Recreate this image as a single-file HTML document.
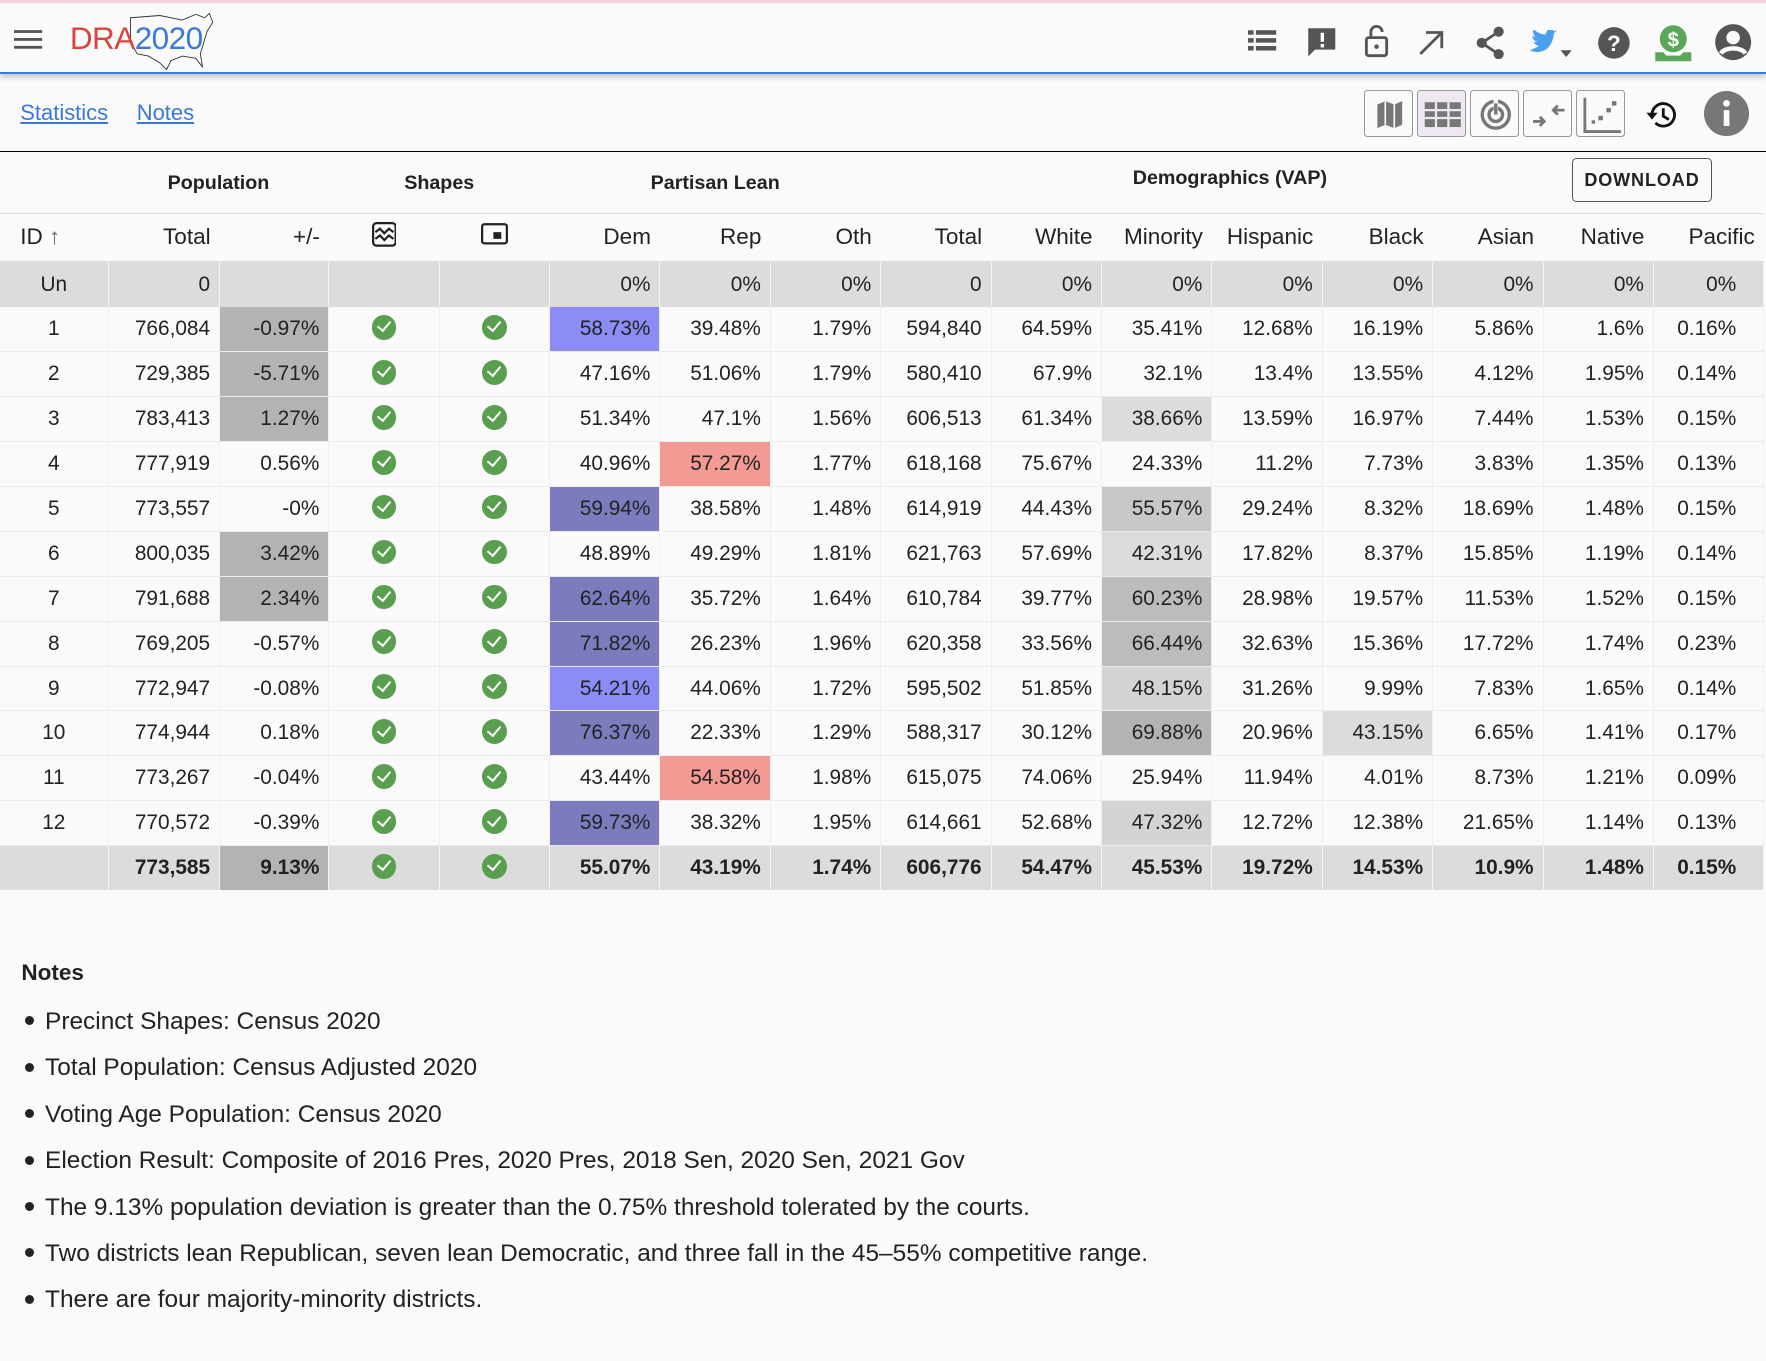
<!DOCTYPE html>
<html><head><meta charset="utf-8"><style>
html,body{margin:0;padding:0;background:#fafafa;}
body{width:1766px;height:1360px;overflow:hidden;}
#w{zoom:1.12628;width:1568px;height:1208px;position:relative;font-family:"Liberation Sans",Arial,sans-serif;color:#222;}
.top{position:absolute;left:0;top:0;width:1568px;height:66px;background:#fafafa;border-top:3px solid #f2d3da;box-sizing:border-box;border-bottom:2px solid #3b78d8;box-shadow:0 3px 5px rgba(0,0,0,.2);}
.ic{position:absolute;top:18px;}
.links{position:absolute;top:89px;left:18px;font-size:19.5px;}
.links a{color:#3b78d8;text-decoration:underline;margin-right:20px;}
.hl{position:absolute;top:134px;left:0;width:1568px;border-top:1.5px solid #000;}
.tb{position:absolute;left:1211px;top:80px;}
.tb div{position:absolute;top:0;width:44px;height:42px;border:1px solid #999;border-radius:3px;box-sizing:border-box;background:#fafafa;}
table{position:absolute;left:0;top:136px;border-collapse:collapse;table-layout:fixed;width:1566px;font-size:18.5px;}
td,th{padding:0 8px;text-align:right;white-space:nowrap;overflow:hidden;}
tr.g th{height:45px;padding:0;font-weight:bold;font-size:17.5px;text-align:center;border-bottom:1px solid #ddd;}
tr.h td{height:42px;padding-top:0;padding-bottom:0;font-size:20px;border-bottom:1px solid #ddd;}
tr.d td{height:39px;border-bottom:1px solid #ebebeb;border-right:1px solid #f0f0f0;}
tr.u td,tr.t td{background:#dcdcdc;height:40px;border-right:1px solid #f4f4f4;}
tr.t td{font-weight:bold;height:39px;}
td:last-child{padding-right:24px;}
td.c{text-align:center;}
.k1{border-left:1.3px solid #000 !important;}
.b1{background:#8b8cf6}.b2{background:#7b7bbe}.r{background:#f39a94}
.g1{background:#b3b3b3 !important}.g2{background:#bcbcbc}.g3{background:#c8c8c8}.g4{background:#d4d4d4}.g5{background:#dcdcdc}
.ck{display:inline-block;width:22px;height:22px;border-radius:50%;background:#5a9e50;position:relative;vertical-align:middle;margin-top:-4px;}
.ck:after{content:"";position:absolute;left:7px;top:3px;width:5px;height:10px;border:solid #fff;border-width:0 2.5px 2.5px 0;transform:rotate(40deg);}
.notes{position:absolute;left:19px;top:852px;font-size:21.7px;}
.notes b{display:block;font-size:20px;margin-bottom:20px;}
.notes div{height:41.2px;}
.notes div:before{content:"";display:inline-block;width:8px;height:8px;border-radius:50%;background:#222;margin:0 10px 3px 3px;vertical-align:middle;}
.dl{position:absolute;left:1396px;top:140px;width:122px;height:38px;border:1px solid #555;border-radius:4px;font-size:16px;font-weight:bold;letter-spacing:.8px;text-align:center;line-height:38px;}
</style></head><body><div id="w">
<div class="top">
<svg class="ic" style="left:12px;top:23px" width="26" height="20"><rect y="1" width="25" height="2.5" fill="#555"/><rect y="8" width="25" height="2.5" fill="#555"/><rect y="15" width="25" height="2.5" fill="#555"/></svg>
<svg style="position:absolute;left:112px;top:7px" width="80" height="56"><path d="M4 6 L30 4 L50 8 L62 3 L70 6 L74 2 L77 10 L72 18 L69 28 L66 38 L68 50 L62 42 L50 40 L40 44 L36 52 L30 46 L20 40 L10 38 L4 28 Z" fill="none" stroke="#333" stroke-width=".8"/></svg>
<div style="position:absolute;left:62px;top:15px;font-size:28px;letter-spacing:-.5px"><span style="color:#d9453d">DRA</span><span style="color:#3b78d8">2020</span></div>
<svg class="ic" style="left:1108px;top:22px" width="26" height="22" fill="#555"><rect x="0" y="2" width="5" height="4"/><rect x="7" y="2" width="18" height="4"/><rect x="0" y="9" width="5" height="4"/><rect x="7" y="9" width="18" height="4"/><rect x="0" y="16" width="5" height="4"/><rect x="7" y="16" width="18" height="4"/></svg>
<svg class="ic" style="left:1160px;top:20px" width="28" height="28"><path d="M2 2h24v19H8l-6 6z" fill="#555"/><rect x="13" y="6" width="3" height="8" fill="#fff"/><rect x="13" y="16" width="3" height="3" fill="#fff"/></svg>
<svg class="ic" style="left:1210px;top:18px" width="24" height="32"><path d="M7 13V8a5 5 0 0 1 10 0" fill="none" stroke="#555" stroke-width="2.5"/><rect x="3" y="13" width="18" height="16" rx="2" fill="none" stroke="#555" stroke-width="2.5"/><circle cx="12" cy="21" r="2" fill="#555"/></svg>
<svg class="ic" style="left:1258px;top:22px" width="26" height="26"><path d="M3 23L22 4M8 4h14v14" fill="none" stroke="#555" stroke-width="2.5"/></svg>
<svg class="ic" style="left:1310px;top:20px" width="28" height="30" fill="#555"><circle cx="21" cy="5" r="4.5"/><circle cx="6" cy="15" r="4.5"/><circle cx="21" cy="25" r="4.5"/><path d="M6 15L21 5M6 15l15 10" stroke="#555" stroke-width="2.5"/></svg>
<svg class="ic" style="left:1358px;top:24px" width="44" height="28"><path d="M1 18c5 3 14 2 18-5 3-5 3-9 3-10l3-3-3 1c-2-3-7-2-7 3-5 0-8-2-11-5-1 3 0 6 2 7-1 0-2 0-3-1 0 3 2 5 4 5-1 1-2 1-3 0 1 3 3 4 5 4-3 2-6 3-8 4z" fill="#4a9ff0"/><path d="M28 18h10l-5 6z" fill="#555"/></svg>
<svg class="ic" style="left:1418px;top:20px" width="30" height="30"><circle cx="15" cy="15" r="14" fill="#555"/><text x="15" y="22" font-size="20" font-weight="bold" fill="#fff" text-anchor="middle" font-family="Liberation Sans">?</text></svg>
<svg class="ic" style="left:1468px;top:18px" width="36" height="36"><circle cx="18" cy="14" r="12" fill="#5aa857"/><text x="18" y="21" font-size="18" font-weight="bold" fill="#fff" text-anchor="middle" font-family="Liberation Sans">$</text><path d="M2 26h7l3 3h12l3-3h7v8H2z" fill="#5aa857"/></svg>
<svg class="ic" style="left:1522px;top:18px" width="34" height="34"><circle cx="17" cy="17" r="16" fill="#555"/><circle cx="17" cy="13" r="6" fill="#fafafa"/><path d="M6 27c4-6 18-6 22 0" stroke="#fafafa" stroke-width="4" fill="none"/></svg>
</div>
<div class="links"><a>Statistics</a> <a>Notes</a></div>
<div class="tb">
<div style="left:0"><svg width="44" height="42"><path d="M11 12l7-3 8 3 7-3v21l-7 3-8-3-7 3z" fill="#777"/><path d="M18 9v21M26 12v21" stroke="#fafafa" stroke-width="1.5"/></svg></div>
<div style="left:47px;background:#efe8f3"><svg width="44" height="42"><rect x="6" y="10" width="32" height="22" fill="#777"/><g stroke="#efe8f3" stroke-width="2"><path d="M6 17h32M6 24h32M16 10v22M27 10v22"/></g></svg></div>
<div style="left:94px"><svg width="44" height="42"><circle cx="22" cy="21" r="12" fill="none" stroke="#777" stroke-width="3"/><circle cx="22" cy="21" r="6" fill="none" stroke="#777" stroke-width="3"/><path d="M22 21V7" stroke="#fafafa" stroke-width="4"/><path d="M22 21V11" stroke="#777" stroke-width="3"/></svg></div>
<div style="left:141px"><svg width="44" height="42"><path d="M8 27h10M14 23l4 4-4 4M36 17H26M30 13l-4 4 4 4" fill="none" stroke="#777" stroke-width="2.5"/></svg></div>
<div style="left:188px"><svg width="44" height="42"><path d="M7 6v30h32" fill="none" stroke="#777" stroke-width="2.5"/><rect x="13" y="26" width="3" height="3" fill="#777"/><rect x="19" y="22" width="4" height="4" fill="#777"/><rect x="26" y="15" width="4" height="4" fill="#777"/><rect x="31" y="9" width="4" height="4" fill="#777"/></svg></div>
<svg style="position:absolute;left:248px;top:6px" width="32" height="32"><path d="M8 16a10 10 0 1 1 3 7" fill="none" stroke="#111" stroke-width="2.5"/><path d="M3 14h10l-5 6z" fill="#111"/><path d="M18 10v7l5 3" fill="none" stroke="#111" stroke-width="2.5"/></svg>
<svg style="position:absolute;left:302px;top:1px" width="40" height="40"><circle cx="20" cy="20" r="20" fill="#777"/><rect x="17.5" y="17" width="5" height="14" fill="#fff"/><circle cx="20" cy="11" r="3" fill="#fff"/></svg>
</div>
<div class="hl"></div>
<div class="dl">DOWNLOAD</div>
<table>
<colgroup><col style="width:96px"><col style="width:99px"><col style="width:97px"><col style="width:98px"><col style="width:98px"><col style="width:98px"><col style="width:98px"><col style="width:98px"><col style="width:98px"><col style="width:98px"><col style="width:98px"><col style="width:98px"><col style="width:98px"><col style="width:98px"><col style="width:98px"><col style="width:98px"></colgroup>
<tr class="g"><th></th><th colspan="2">Population</th><th colspan="2">Shapes</th><th colspan="3">Partisan Lean</th><th colspan="6" style="padding-bottom:8px;padding-left:32px">Demographics (VAP)</th><th colspan="2"></th></tr>
<tr class="h"><td class="c" style="text-align:left;padding-left:18px">ID <span style="color:#666">&#8593;</span></td><td>Total</td><td>+/-</td><td class="c"><svg width="22" height="22"><rect x="1" y="1" width="20" height="20" rx="3" fill="none" stroke="#222" stroke-width="2"/><path d="M3 9l4-3 4 4 4-4 4 3M3 15l4-3 4 4 4-4 4 3" fill="none" stroke="#222" stroke-width="2"/></svg></td><td class="c"><svg width="24" height="22"><rect x="1" y="2" width="22" height="17" rx="2" fill="none" stroke="#222" stroke-width="2"/><rect x="11" y="9" width="7" height="6" fill="#222"/></svg></td><td>Dem</td><td>Rep</td><td>Oth</td><td>Total</td><td>White</td><td>Minority</td><td>Hispanic</td><td>Black</td><td>Asian</td><td>Native</td><td style="padding-right:8px">Pacific</td></tr>
<tr class="u"><td class="c">Un</td><td class="k1">0</td><td></td><td class="k1"></td><td></td><td class="k1">0%</td><td>0%</td><td>0%</td><td class="k1">0</td><td>0%</td><td>0%</td><td>0%</td><td>0%</td><td>0%</td><td>0%</td><td>0%</td></tr>
<tr class="d"><td class="c">1</td><td class="k1">766,084</td><td class="g1">-0.97%</td><td class="c k1"><i class="ck"></i></td><td class="c"><i class="ck"></i></td><td class="k1 b1">58.73%</td><td>39.48%</td><td>1.79%</td><td class="k1">594,840</td><td>64.59%</td><td>35.41%</td><td>12.68%</td><td>16.19%</td><td>5.86%</td><td>1.6%</td><td>0.16%</td></tr>
<tr class="d"><td class="c">2</td><td class="k1">729,385</td><td class="g1">-5.71%</td><td class="c k1"><i class="ck"></i></td><td class="c"><i class="ck"></i></td><td class="k1">47.16%</td><td>51.06%</td><td>1.79%</td><td class="k1">580,410</td><td>67.9%</td><td>32.1%</td><td>13.4%</td><td>13.55%</td><td>4.12%</td><td>1.95%</td><td>0.14%</td></tr>
<tr class="d"><td class="c">3</td><td class="k1">783,413</td><td class="g1">1.27%</td><td class="c k1"><i class="ck"></i></td><td class="c"><i class="ck"></i></td><td class="k1">51.34%</td><td>47.1%</td><td>1.56%</td><td class="k1">606,513</td><td>61.34%</td><td class="g5">38.66%</td><td>13.59%</td><td>16.97%</td><td>7.44%</td><td>1.53%</td><td>0.15%</td></tr>
<tr class="d"><td class="c">4</td><td class="k1">777,919</td><td>0.56%</td><td class="c k1"><i class="ck"></i></td><td class="c"><i class="ck"></i></td><td class="k1">40.96%</td><td class="r">57.27%</td><td>1.77%</td><td class="k1">618,168</td><td>75.67%</td><td>24.33%</td><td>11.2%</td><td>7.73%</td><td>3.83%</td><td>1.35%</td><td>0.13%</td></tr>
<tr class="d"><td class="c">5</td><td class="k1">773,557</td><td>-0%</td><td class="c k1"><i class="ck"></i></td><td class="c"><i class="ck"></i></td><td class="k1 b2">59.94%</td><td>38.58%</td><td>1.48%</td><td class="k1">614,919</td><td>44.43%</td><td class="g3">55.57%</td><td>29.24%</td><td>8.32%</td><td>18.69%</td><td>1.48%</td><td>0.15%</td></tr>
<tr class="d"><td class="c">6</td><td class="k1">800,035</td><td class="g1">3.42%</td><td class="c k1"><i class="ck"></i></td><td class="c"><i class="ck"></i></td><td class="k1">48.89%</td><td>49.29%</td><td>1.81%</td><td class="k1">621,763</td><td>57.69%</td><td class="g5">42.31%</td><td>17.82%</td><td>8.37%</td><td>15.85%</td><td>1.19%</td><td>0.14%</td></tr>
<tr class="d"><td class="c">7</td><td class="k1">791,688</td><td class="g1">2.34%</td><td class="c k1"><i class="ck"></i></td><td class="c"><i class="ck"></i></td><td class="k1 b2">62.64%</td><td>35.72%</td><td>1.64%</td><td class="k1">610,784</td><td>39.77%</td><td class="g2">60.23%</td><td>28.98%</td><td>19.57%</td><td>11.53%</td><td>1.52%</td><td>0.15%</td></tr>
<tr class="d"><td class="c">8</td><td class="k1">769,205</td><td>-0.57%</td><td class="c k1"><i class="ck"></i></td><td class="c"><i class="ck"></i></td><td class="k1 b2">71.82%</td><td>26.23%</td><td>1.96%</td><td class="k1">620,358</td><td>33.56%</td><td class="g2">66.44%</td><td>32.63%</td><td>15.36%</td><td>17.72%</td><td>1.74%</td><td>0.23%</td></tr>
<tr class="d"><td class="c">9</td><td class="k1">772,947</td><td>-0.08%</td><td class="c k1"><i class="ck"></i></td><td class="c"><i class="ck"></i></td><td class="k1 b1">54.21%</td><td>44.06%</td><td>1.72%</td><td class="k1">595,502</td><td>51.85%</td><td class="g4">48.15%</td><td>31.26%</td><td>9.99%</td><td>7.83%</td><td>1.65%</td><td>0.14%</td></tr>
<tr class="d"><td class="c">10</td><td class="k1">774,944</td><td>0.18%</td><td class="c k1"><i class="ck"></i></td><td class="c"><i class="ck"></i></td><td class="k1 b2">76.37%</td><td>22.33%</td><td>1.29%</td><td class="k1">588,317</td><td>30.12%</td><td class="g1">69.88%</td><td>20.96%</td><td class="g5">43.15%</td><td>6.65%</td><td>1.41%</td><td>0.17%</td></tr>
<tr class="d"><td class="c">11</td><td class="k1">773,267</td><td>-0.04%</td><td class="c k1"><i class="ck"></i></td><td class="c"><i class="ck"></i></td><td class="k1">43.44%</td><td class="r">54.58%</td><td>1.98%</td><td class="k1">615,075</td><td>74.06%</td><td>25.94%</td><td>11.94%</td><td>4.01%</td><td>8.73%</td><td>1.21%</td><td>0.09%</td></tr>
<tr class="d"><td class="c">12</td><td class="k1">770,572</td><td>-0.39%</td><td class="c k1"><i class="ck"></i></td><td class="c"><i class="ck"></i></td><td class="k1 b2">59.73%</td><td>38.32%</td><td>1.95%</td><td class="k1">614,661</td><td>52.68%</td><td class="g4">47.32%</td><td>12.72%</td><td>12.38%</td><td>21.65%</td><td>1.14%</td><td>0.13%</td></tr>
<tr class="t"><td></td><td class="k1">773,585</td><td class="g1">9.13%</td><td class="c k1"><i class="ck"></i></td><td class="c"><i class="ck"></i></td><td class="k1">55.07%</td><td>43.19%</td><td>1.74%</td><td class="k1">606,776</td><td>54.47%</td><td>45.53%</td><td>19.72%</td><td>14.53%</td><td>10.9%</td><td>1.48%</td><td>0.15%</td></tr>
</table>
<div class="notes"><b>Notes</b>
<div>Precinct Shapes: Census 2020</div>
<div>Total Population: Census Adjusted 2020</div>
<div>Voting Age Population: Census 2020</div>
<div>Election Result: Composite of 2016 Pres, 2020 Pres, 2018 Sen, 2020 Sen, 2021 Gov</div>
<div>The 9.13% population deviation is greater than the 0.75% threshold tolerated by the courts.</div>
<div>Two districts lean Republican, seven lean Democratic, and three fall in the 45–55% competitive range.</div>
<div>There are four majority-minority districts.</div>
</div>
</div></body></html>
